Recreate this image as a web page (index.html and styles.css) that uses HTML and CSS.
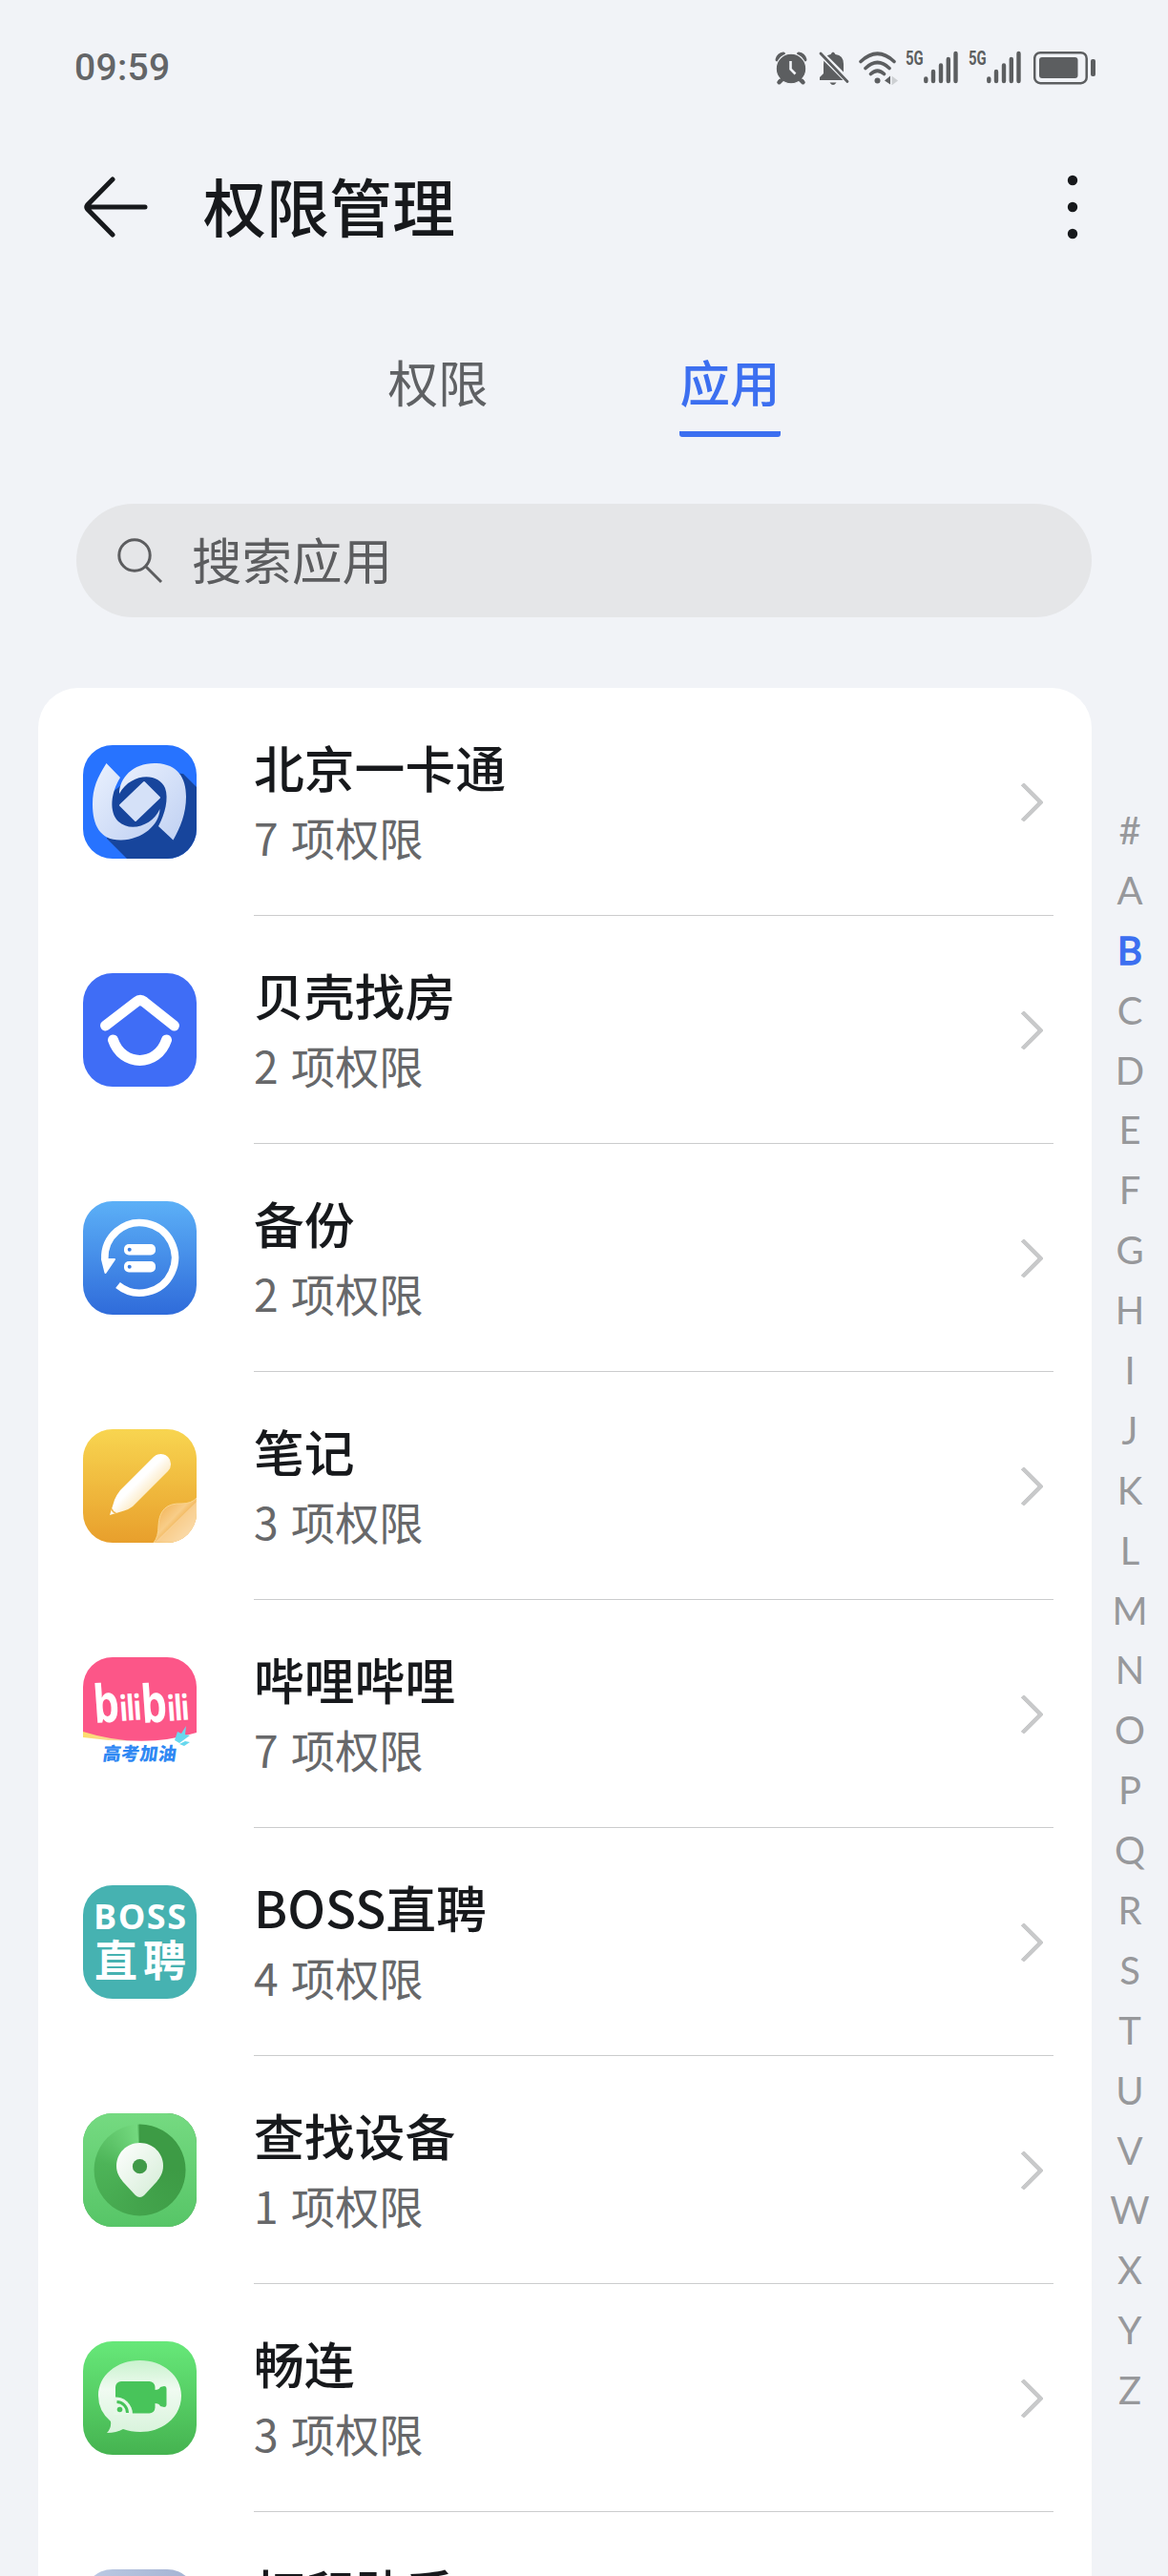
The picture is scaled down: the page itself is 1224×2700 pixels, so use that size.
FILE: index.html
```html
<!DOCTYPE html>
<html lang="zh-CN">
<head>
  <meta charset="UTF-8">
  <meta name="viewport" content="width=device-width, initial-scale=1.0">
  <title>权限管理</title>
  <link rel="stylesheet" href="styles.css">
</head>
<body>
  <div class="screen">
    <div class="status-bar">
      <span class="time">09:59</span>
      <div class="status-icons">
        <svg class="alarm" width="34" height="36" viewBox="0 0 34 36">
          <g fill="none" stroke="#5c5e60" stroke-width="4" stroke-linecap="round"><path d="M2.500 9.500Q4 4 9 3.500M31.500 9.500Q30 4 25 3.500M8 29L4.500 33M26 29l3.500 4"/></g>
          <circle cx="17" cy="19" r="15.800" fill="#5c5e60" stroke="#f1f3f7" stroke-width="1.200"/>
          <path d="M7.500 30.500L4.500 33.500M26.500 30.500l3 3" stroke="#5c5e60" stroke-width="4" stroke-linecap="round"/>
          <path d="M16.500 11v8.500l5 5" fill="none" stroke="#f1f3f7" stroke-width="2.600"/>
        </svg>
        <svg class="bell" width="34" height="37" viewBox="0 0 34 37">
          <path d="M2 31v-3l4-4v-9Q6 5 13.500 4Q16-1 18.500 4Q27 5 27 14v9l2 8zM12.500 33.500h7q-3.500 5-7 0z" fill="#5c5e60"/>
          <path d="M1 1L33 33" stroke="#f1f3f7" stroke-width="6.500"/>
          <path d="M3 3L31 32.500" stroke="#5c5e60" stroke-width="2.800" stroke-linecap="round"/>
        </svg>
        <svg class="wifi" width="42" height="36" viewBox="0 0 42 36">
          <g fill="none" stroke="#5c5e60" stroke-width="3.600" stroke-linecap="round"><path d="M2 11.500Q19.500-5 37 11.500M7 18.500Q19.500 6.500 32 18.500M12.500 24.500q7-6.500 14 0"/></g>
          <circle cx="19.500" cy="31.500" r="3" fill="#5c5e60"/>
          <path d="M27 31.500l6-5v9z" fill="#5c5e60"/>
          <path d="M34.500 26.500l6.500 5-6.500 5z" fill="#cdd0d3"/>
        </svg>
        <div class="signal">
          <span>5G</span>
          <svg width="36" height="36" viewBox="0 0 36 36"><path d="M2.300 29.500v2.500M10 22v10M18 15.500V32M25.800 9V32M33.500 3V32" stroke="#5c5e60" stroke-width="4.400" stroke-linecap="round"/></svg>
        </div>
        <div class="signal">
          <span>5G</span>
          <svg width="36" height="36" viewBox="0 0 36 36"><path d="M2.300 29.500v2.500M10 22v10M18 15.500V32M25.800 9V32M33.500 3V32" stroke="#5c5e60" stroke-width="4.400" stroke-linecap="round"/></svg>
        </div>
        <svg class="battery" width="66" height="36" viewBox="0 0 66 36">
          <rect x="1.200" y="2.200" width="54.500" height="32" rx="6" fill="none" stroke="#5c5e60" stroke-width="2.500"/>
          <rect x="6" y="7" width="40.500" height="22" rx="3" fill="#5c5e60"/>
          <rect x="60" y="9" width="5" height="18" rx="2" fill="#5c5e60"/>
        </svg>
      </div>
    </div>

    <header class="title-bar">
      <svg class="back" width="68" height="64" viewBox="0 0 68 64">
        <path d="M31 3L4.500 30Q3 32 4.500 34L31 61M4 32H65" fill="none" stroke="#17191c" stroke-width="5" stroke-linecap="round"/>
      </svg>
      <h1>权限管理</h1>
      <svg class="more" width="12" height="68" viewBox="0 0 12 68">
        <g fill="#17191c"><circle cx="6" cy="6" r="5.200"/><circle cx="6" cy="34" r="5.200"/><circle cx="6" cy="62" r="5.200"/></g>
      </svg>
    </header>

    <nav class="tabs">
      <span class="tab">权限</span>
      <span class="tab active">应用</span>
    </nav>

    <div class="search">
      <svg width="48" height="48" viewBox="0 0 48 48">
        <g fill="none" stroke="#5c5d5f" stroke-width="3"><circle cx="18" cy="18" r="16.200"/><path d="M29.500 29.500L46 46"/></g>
      </svg>
      <span>搜索应用</span>
    </div>

    <div class="content">
      <ul class="app-list">
        <li>
          <svg class="app-icon" viewBox="0 0 119 119">
            <defs><linearGradient id="card" x2="1" y2="1"><stop offset="0" stop-color="#eaf1fe"/><stop offset="1" stop-color="#bfd0f2"/></linearGradient></defs>
            <rect width="119" height="119" fill="#2773ff"/>
            <path d="M25 98L46 119H119V44L105 30 60 26 30 50z" fill="#17459c"/>
            <path d="M39 34L50 22 70 19 44 40z" fill="#2773ff"/>
            <path d="M24.500 19L39 34C29 50 27 70 37 80C50 92 73 84 80.500 67C80 84 62 99 40 99.500C18 100 10 84 10 62C10 45 15 34 24.500 19z" fill="url(#card)"/>
            <path d="M38 51C38 34 53 18 77 19C99 20 108 34 108 54C108 72 102 86 94.500 99.500L79 85C86 72 90 56 86 45C79 28 50 29 38 51z" fill="url(#card)"/>
            <path d="M64 39L80 55 55 79 39 63z" fill="#d5e1f8" stroke="#d5e1f8" stroke-width="2" stroke-linejoin="round"/>
          </svg>
          <div class="info"><h2>北京一卡通</h2><p>7 项权限</p></div>
          <i class="arrow"></i>
        </li>
        <li>
          <svg class="app-icon" viewBox="0 0 119 119">
            <rect width="119" height="119" fill="#3f6df6"/>
            <path d="M23.500 55L56 30Q60 27 64 30L95.500 55M31.500 70C41 98.500 78 98.500 87.500 70" fill="none" stroke="#fff" stroke-width="11" stroke-linecap="round"/>
          </svg>
          <div class="info"><h2>贝壳找房</h2><p>2 项权限</p></div>
          <i class="arrow"></i>
        </li>
        <li>
          <svg class="app-icon" viewBox="0 0 119 119">
            <defs><linearGradient id="backup" x2="0" y2="1"><stop offset="0" stop-color="#5cb0f7"/><stop offset="1" stop-color="#2f6bda"/></linearGradient></defs>
            <rect width="119" height="119" fill="url(#backup)"/>
            <path d="M36.500 88A36.800 36.800 0 1 0 22.800 61" fill="none" stroke="#fff" stroke-width="7.500"/>
            <path d="M20 61H33L23.500 75z" fill="#fff" stroke="#fff" stroke-width="2" stroke-linejoin="round"/>
            <rect x="43" y="45" width="33" height="11.500" rx="5" fill="#fff"/>
            <rect x="43" y="63" width="33" height="11.500" rx="5" fill="#fff"/>
            <circle cx="48.700" cy="50.800" r="2" fill="#3a7ee2"/><circle cx="48.700" cy="68.700" r="2" fill="#3a7ee2"/>
          </svg>
          <div class="info"><h2>备份</h2><p>2 项权限</p></div>
          <i class="arrow"></i>
        </li>
        <li>
          <svg class="app-icon" viewBox="0 0 119 119">
            <defs>
              <linearGradient id="note" x2="0" y2="1"><stop offset="0" stop-color="#f8d550"/><stop offset="1" stop-color="#e89f2c"/></linearGradient>
              <linearGradient id="pen" x1="0.300" y1="0.300" x2="0.700" y2="0.700"><stop offset="0.400" stop-color="#fff"/><stop offset="1" stop-color="#fbe3b0"/></linearGradient>
              <linearGradient id="curl" x2="1" y2="1"><stop offset="0" stop-color="#f0a63c"/><stop offset="0.450" stop-color="#f8cd88"/><stop offset="0.550" stop-color="#f3b95f"/><stop offset="1" stop-color="#fdeacb"/></linearGradient>
            </defs>
            <rect width="119" height="119" fill="url(#note)"/>
            <path d="M28 90L33 74Q35 69 39 64L74 29A10 10 0 0 1 89 44L52 81Q48 84 43 85.500z" fill="url(#pen)"/>
            <path d="M30 83.500Q31 87 34.500 88" fill="none" stroke="#f0b850" stroke-width="1.500"/>
            <path d="M74 119Q79 113 79 101Q80 77 103 78Q114 78 119 72V119z" fill="url(#curl)" stroke="#fad58c" stroke-width="1"/>
            <path d="M76 118L119 76V119z" fill="#fbdcae" opacity=".6"/>
          </svg>
          <div class="info"><h2>笔记</h2><p>3 项权限</p></div>
          <i class="arrow"></i>
        </li>
        <li>
          <svg class="app-icon" viewBox="0 0 119 119">
            <defs><linearGradient id="rainbow"><stop offset="0" stop-color="#fddc6b"/><stop offset="0.300" stop-color="#f8d6a0"/><stop offset="0.600" stop-color="#8fb8f5"/><stop offset="1" stop-color="#ff8fb5"/></linearGradient></defs>
            <rect width="119" height="119" fill="#fff"/>
            <path d="M0 70V84Q60 93 119 78V70z" fill="url(#rainbow)"/>
            <path d="M0 0H119V79Q60 97 0 78z" fill="#fc5688"/>
            <g fill="#fff">
              <text class="bili" transform="translate(12 69) rotate(-4) scale(.78 1)"><tspan class="b">b</tspan><tspan class="ili">ili</tspan></text>
              <text class="bili" transform="translate(62 69) rotate(-4) scale(.78 1)"><tspan class="b">b</tspan><tspan class="ili">ili</tspan></text>
            </g>
            <path d="M96 87L99 78 103 80 108 72 107 81 112 82 101 90zM101 91l6-3 5 1-6 4z" fill="#68d8ee"/>
            <text class="gaokao" transform="translate(20 108) skewX(-8)" textLength="77">高考加油</text>
          </svg>
          <div class="info"><h2>哔哩哔哩</h2><p>7 项权限</p></div>
          <i class="arrow"></i>
        </li>
        <li>
          <svg class="app-icon" viewBox="0 0 119 119">
            <rect width="119" height="119" fill="#46b2b1"/>
            <text class="boss" x="11" y="46" textLength="97">BOSS</text>
            <text class="boss-cn" x="12" y="96" textLength="96">直聘</text>
          </svg>
          <div class="info"><h2>BOSS直聘</h2><p>4 项权限</p></div>
          <i class="arrow"></i>
        </li>
        <li>
          <svg class="app-icon find" viewBox="0 0 119 119">
            <defs>
              <linearGradient id="find" x2="0" y2="1"><stop offset="0" stop-color="#75da81"/><stop offset="1" stop-color="#57c567"/></linearGradient>
              <linearGradient id="pin" x2="1" y2="1"><stop offset="0" stop-color="#fff"/><stop offset="1" stop-color="#d3ecd5"/></linearGradient>
            </defs>
            <path d="M0 0H119V119H0zM59.500 11.500A48 48 0 1 0 59.600 11.500z" fill="url(#find)" fill-rule="evenodd"/>
            <path d="M59.500 31C73.500 31 84 42 84 55C84 62 81 67 77 72L64 86Q59.500 90 55 86L42 72C38 67 35 62 35 55C35 42 45.500 31 59.500 31z" fill="url(#pin)"/>
            <circle cx="59.500" cy="55.700" r="7.600" fill="#409a48"/>
          </svg>
          <div class="info"><h2>查找设备</h2><p>1 项权限</p></div>
          <i class="arrow"></i>
        </li>
        <li>
          <svg class="app-icon" viewBox="0 0 119 119">
            <defs>
              <linearGradient id="meet" x2="0" y2="1"><stop offset="0" stop-color="#67e879"/><stop offset="1" stop-color="#45b350"/></linearGradient>
              <linearGradient id="bubble" x2="0" y2="1"><stop offset="0" stop-color="#c9f2ce"/><stop offset="0.400" stop-color="#f0fbf1"/><stop offset="1" stop-color="#d9f3dc"/></linearGradient>
            </defs>
            <rect width="119" height="119" fill="url(#meet)"/>
            <path d="M59.500 20C84 20 103 36 103 57C103 79 84 95 60 95Q50 95 42 92Q35 96 25 96Q30 91 29 84Q16 73 16 57C16 36 35 20 59.500 20z" fill="url(#bubble)"/>
            <rect x="34" y="42" width="41.500" height="33.500" rx="6" fill="#48c45a"/>
            <path d="M75 51Q80 51 81 48L85 47Q87.500 47 87.500 50V66Q87.500 69 85 69L81 68Q80 65 75 65z" fill="#48c45a"/>
            <path d="M32 58.500A18 18 0 0 1 52 77H32z" fill="#e6f8e8"/>
            <path d="M35.500 63.500A11.500 11.500 0 0 1 46.500 75" fill="none" stroke="#48c45a" stroke-width="3"/>
            <circle cx="38.500" cy="71.500" r="2.800" fill="#48c45a"/>
          </svg>
          <div class="info"><h2>畅连</h2><p>3 项权限</p></div>
          <i class="arrow"></i>
        </li>
        <li>
          <svg class="app-icon" viewBox="0 0 119 119">
            <defs><linearGradient id="print"><stop offset="0" stop-color="#bdcbe4"/><stop offset="1" stop-color="#a3b2d2"/></linearGradient></defs>
            <rect width="119" height="119" fill="url(#print)"/>
          </svg>
          <div class="info"><h2>打印助手</h2></div>
          <i class="arrow"></i>
        </li>
      </ul>

      <div class="index">
        <span>#</span>
        <span>A</span>
        <span class="current">B</span>
        <span>C</span>
        <span>D</span>
        <span>E</span>
        <span>F</span>
        <span>G</span>
        <span>H</span>
        <span>I</span>
        <span>J</span>
        <span>K</span>
        <span>L</span>
        <span>M</span>
        <span>N</span>
        <span>O</span>
        <span>P</span>
        <span>Q</span>
        <span>R</span>
        <span>S</span>
        <span>T</span>
        <span>U</span>
        <span>V</span>
        <span>W</span>
        <span>X</span>
        <span>Y</span>
        <span>Z</span>
      </div>
    </div>
  </div>
</body>
</html>
```
FILE: styles.css
```css
* {
  box-sizing: border-box;
}
body {
  margin: 0;
  background: #f1f3f7;
  color: #17191c;
  font-family: "Noto Sans CJK SC", sans-serif;
}
h1, h2, p, ul {
  margin: 0;
  padding: 0;
}
svg {
  display: block;
  flex: none;
}
.screen {
  width: 1224px;
  height: 2700px;
  overflow: hidden;
}

/* status bar */
.status-bar {
  display: flex;
  justify-content: space-between;
  align-items: center;
  height: 142px;
  padding: 0 75px 0 78px;
}
.time {
  font-family: Roboto, sans-serif;
  font-size: 39px;
  font-weight: 500;
  color: #636567;
  letter-spacing: 0.3px;
}
.status-icons {
  display: flex;
  align-items: center;
}
.bell {
  margin-left: 11px;
}
.wifi {
  margin-left: 9px;
}
.signal {
  display: flex;
  align-items: flex-start;
  width: 55px;
  margin-left: 7px;
}
.signal + .signal {
  margin-left: 11px;
}
.signal span {
  width: 19px;
  font: bold 20px/17px "Roboto", sans-serif;
  color: #5c5e60;
  transform: scaleX(0.74);
  transform-origin: left;
}
.battery {
  margin-left: 13px;
}

/* title */
.title-bar {
  display: flex;
  align-items: center;
  height: 150px;
  padding: 0 94px 0 87px;
}
h1 {
  flex: 1;
  margin-left: 58px;
  padding-bottom: 6px;
  font-size: 66px;
  line-height: 80px;
  font-weight: 500;
}

.tabs {
  display: flex;
  justify-content: center;
  gap: 200px;
  height: 169px;
  margin-top: 67px;
}
.tab {
  width: 106px;
  height: 99px;
  font-size: 52.5px;
  line-height: 80px;
  color: #5f6164;
  text-align: center;
}
.tab.active {
  color: #3c6ff0;
  font-weight: 500;
  border-bottom: 6px solid #3c6ff0;
  border-radius: 3px;
}

.search {
  display: flex;
  align-items: center;
  gap: 30px;
  width: 1064px;
  height: 119px;
  margin-left: 80px;
  padding: 0 43px;
  border-radius: 60px;
  background: #e5e6e8;
  color: #5c5d5f;
  font-size: 52.5px;
}
.search span {
  padding-bottom: 6px;
}

/* app list */
.content {
  display: flex;
  align-items: flex-start;
  margin-top: 74px;
}
.app-list {
  width: 1104px;
  margin-left: 40px;
  padding: 0 40px 0 47px;
  background: #fff;
  border-radius: 42px 42px 0 0;
  list-style: none;
}
.app-list li {
  display: flex;
  align-items: center;
  height: 239px;
}
.app-icon {
  width: 119px;
  height: 119px;
  border-radius: 31px;
}
.info {
  flex: 1;
  height: 239px;
  margin-left: 60px;
  padding-top: 42px;
  border-bottom: 1px solid #cbcccd;
}
.info h2 {
  font-size: 52.8px;
  line-height: 80px;
  font-weight: 500;
}
.info p {
  padding-top: 1px;
  font-size: 46.2px;
  line-height: 66px;
  word-spacing: 3px;
  color: #67686a;
}
.arrow {
  align-self: stretch;
  display: flex;
  align-items: center;
  width: 32px;
  margin-left: -32px;
}
.arrow::before {
  content: "";
  width: 25px;
  height: 25px;
  margin-left: -14px;
  border: solid #c8c9ca;
  border-width: 5px 5px 0 0;
  border-radius: 3px;
  transform: rotate(45deg);
}
.find {
  background: conic-gradient(#3d9b45 0 25%, #43a44c 50%, #4db458 78%, #74d97f 99%, #3d9b45 100%);
}
.bili {
  font-family: "Open Sans", sans-serif;
  font-weight: bold;
}
.b {
  font-size: 55px;
}
.ili {
  font-size: 37px;
  letter-spacing: -2px;
}
.gaokao {
  font: 900 19px "Noto Sans CJK SC", sans-serif;
  fill: #2f88f3;
}
.boss {
  font: bold 36px "Open Sans", sans-serif;
  fill: #fff;
}
.boss-cn {
  font: bold 45px "Noto Sans CJK SC", sans-serif;
  fill: #fff;
}

/* A-Z index */
.index {
  display: flex;
  flex-direction: column;
  width: 80px;
  margin-top: 118px;
}
.index span {
  height: 62.9px;
  font-family: Lato, sans-serif;
  font-size: 40px;
  line-height: 63px;
  text-align: center;
  color: #97989b;
}
.index .current {
  color: #3c6ff0;
  -webkit-text-stroke: 1.5px #3c6ff0;
}
```
